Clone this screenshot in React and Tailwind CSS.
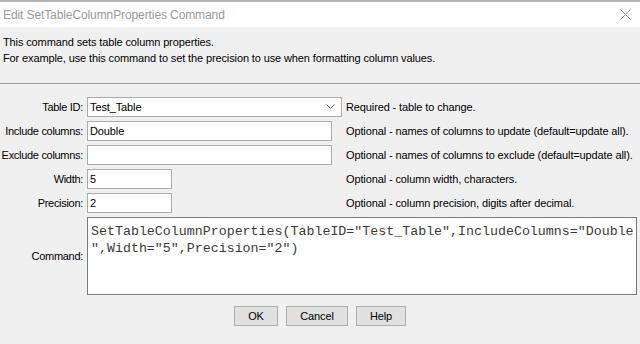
import React from 'react';

const ui = { fontFamily: '"Liberation Sans", Arial, sans-serif' };
const mono = { fontFamily: '"Liberation Mono", "Courier New", monospace' };

function Label({ children, center }) {
  return <div className={`flex justify-end pr-[4px] whitespace-nowrap text-[11px] tracking-[-0.3px] text-black ${center ? 'items-center' : 'items-center h-5'}`}>{children}</div>;
}

function TextBox({ value, w }) {
  return <div className={`${w} h-5 bg-white border border-[#ababab] flex items-center px-[2px] text-[11px] text-black`}>{value}</div>;
}

function Hint({ children }) {
  return <div className="h-5 flex items-center whitespace-nowrap text-[11px] text-black">{children}</div>;
}

export default function App() {
  return <div className="w-[640px] h-[344px] flex flex-col bg-[#f0f0f0] overflow-hidden tracking-[-0.12px]" style={ui}>
    <div className="h-[2px] bg-[#b4b4b4]" />
    <div className="h-[25px] bg-white flex items-center justify-between pl-[3px] pr-[9px]">
      <span className="text-[12px] tracking-[-0.1px] text-[#999999]">Edit SetTableColumnProperties Command</span>
      <svg width="11" height="11" viewBox="0 0 11 11" className="text-[#8a8a8a]">
        <path d="M0.5 0.5 L10.5 10.5 M10.5 0.5 L0.5 10.5" stroke="currentColor" strokeWidth="1" fill="none" />
      </svg>
    </div>

    <div className="pt-[7px] px-[3px] text-[11px] leading-[16px] text-black">
      <div>This command sets table column properties.</div>
      <div>For example, use this command to set the precision to use when formatting column values.</div>
    </div>

    <div className="mt-[17px] h-px bg-[#a0a0a0]" />

    <div className="mt-[13px] grid grid-cols-[87px_259px_1fr] gap-y-1">
      <Label>Table ID:</Label>
      <div className="w-[255px] h-5 bg-white border border-[#ababab] flex items-center justify-between pl-[2px] pr-[6px] text-[11px]">
        <span>Test_Table</span>
        <svg width="9" height="6" viewBox="0 0 9 6">
          <path d="M0.5 0.5 L4.5 4.5 L8.5 0.5" stroke="#606060" strokeWidth="1" fill="none" />
        </svg>
      </div>
      <Hint>Required - table to change.</Hint>

      <Label>Include columns:</Label>
      <TextBox value="Double" w="w-[245px]" />
      <Hint>Optional - names of columns to update (default=update all).</Hint>

      <Label>Exclude columns:</Label>
      <TextBox value="" w="w-[245px]" />
      <Hint>Optional - names of columns to exclude (default=update all).</Hint>

      <Label>Width:</Label>
      <TextBox value="5" w="w-[85px]" />
      <Hint>Optional - column width, characters.</Hint>

      <Label>Precision:</Label>
      <TextBox value="2" w="w-[85px]" />
      <Hint>Optional - column precision, digits after decimal.</Hint>

      <Label center>Command:</Label>
      <div className="col-span-2 mr-[3px] h-[78px] bg-white border border-[#7a7a7a] pt-[5px] px-[3px] text-[13.3px] leading-[17px] tracking-normal text-[#3a3a3a] whitespace-pre" style={mono}>
        <div>SetTableColumnProperties(TableID="Test_Table",IncludeColumns="Double</div>
        <div>",Width="5",Precision="2")</div>
      </div>
    </div>

    <div className="mt-[11px] flex justify-center gap-2">
      <button className="w-[44px] h-5 bg-[#e1e1e1] border border-[#adadad] text-[11px] text-black">OK</button>
      <button className="w-[62px] h-5 bg-[#e1e1e1] border border-[#adadad] text-[11px] text-black">Cancel</button>
      <button className="w-[50px] h-5 bg-[#e1e1e1] border border-[#adadad] text-[11px] text-black">Help</button>
    </div>
  </div>;
}
